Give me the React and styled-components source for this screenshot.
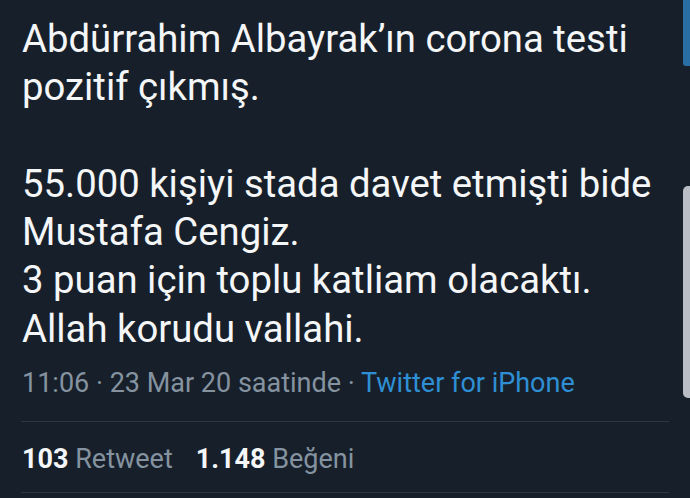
import styled, { createGlobalStyle } from "styled-components";

const GlobalStyle = createGlobalStyle`
    html, body {
        margin: 0;
        padding: 0;
        background-color: #17202a;
    }
`;

function App() {
    return (
        <>
            <GlobalStyle />
            <Screen>
                <Tweet>
                    <Body>
                        <Line>Abdürrahim Albayrak’ın corona testi</Line>
                        <Line>pozitif çıkmış.</Line>
                        <Line>&nbsp;</Line>
                        <Line>55.000 kişiyi stada davet etmişti bide</Line>
                        <Line>Mustafa Cengiz.</Line>
                        <Line>3 puan için toplu katliam olacaktı.</Line>
                        <Line>Allah korudu vallahi.</Line>
                    </Body>
                    <Meta>
                        11:06 · 23 Mar 20 saatinde · <Source>Twitter for iPhone</Source>
                    </Meta>
                    <Stats>
                        <Stat>
                            <Count>103</Count> Retweet
                        </Stat>
                        <Stat>
                            <Count>1.148</Count> Beğeni
                        </Stat>
                    </Stats>
                </Tweet>
                <EdgeTab />
                <ScrollThumb />
            </Screen>
        </>
    );
}

export default App;

const Screen = styled.div`
    position: relative;
    width: 690px;
    height: 498px;
    overflow: hidden;
    background-color: #17202a;
    font-family: Roboto, "Liberation Sans", sans-serif;
`;

const Tweet = styled.div`
    display: flex;
    flex-direction: column;
    padding: 15px 21px 0 21px;
`;

const Body = styled.div`
    display: flex;
    flex-direction: column;
    padding-left: 1px;
    font-size: 38.3px;
    line-height: 48.3px;
    color: #f4f6f8;
`;

const Line = styled.span`
    white-space: nowrap;
`;

const Meta = styled.div`
    margin-top: 14px;
    padding: 0 0 22px 1px;
    font-size: 27px;
    line-height: 32px;
    color: #8593a0;
    border-bottom: 1px solid #2c3743;
`;

const Source = styled.span`
    color: #2f8fd4;
`;

const Stats = styled.div`
    display: flex;
    gap: 23px;
    padding: 21px 0 17px 1px;
    font-size: 27px;
    line-height: 32px;
    color: #8593a0;
    border-bottom: 1px solid #2c3743;
`;

const Stat = styled.span``;

const Count = styled.span`
    font-weight: 700;
    color: #f4f6f8;
`;

const EdgeTab = styled.div`
    position: absolute;
    top: 0;
    right: 0;
    width: 7px;
    height: 66px;
    background-color: #2a6ea6;
    border-bottom-left-radius: 3px;
`;

const ScrollThumb = styled.div`
    position: absolute;
    top: 186px;
    right: 0;
    width: 7px;
    height: 212px;
    background-color: #b9bec6;
    border-radius: 5px 0 0 5px;
`;
